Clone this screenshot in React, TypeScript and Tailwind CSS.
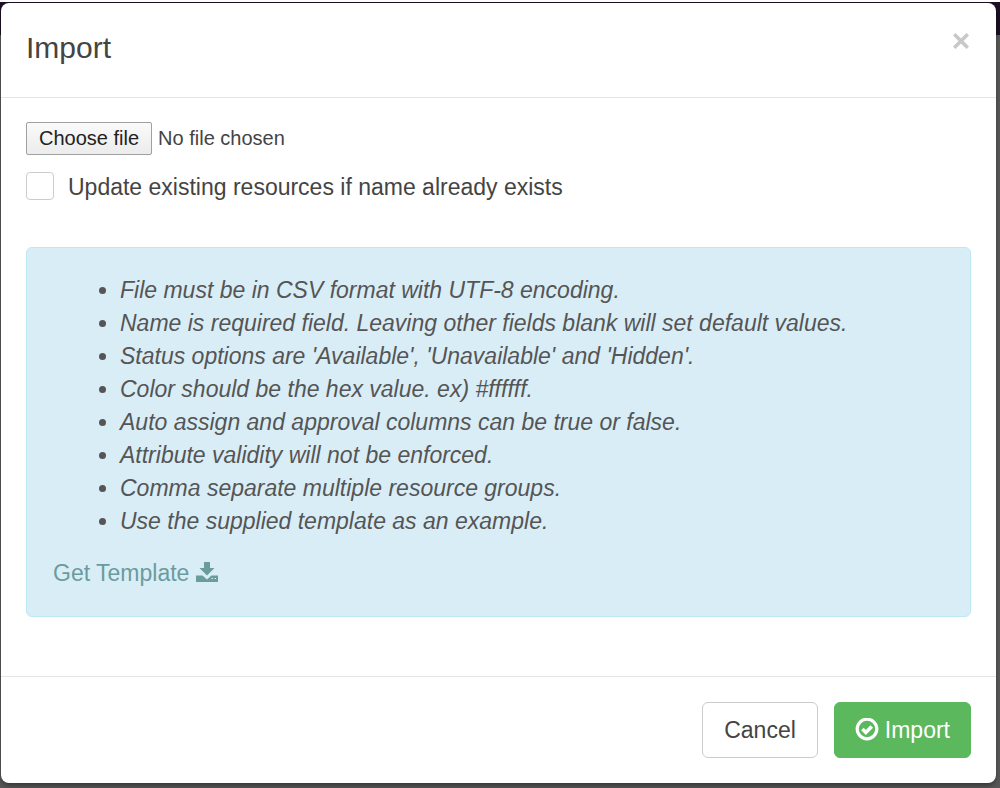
import { useState } from "react";

const hints = [
  "File must be in CSV format with UTF-8 encoding.",
  "Name is required field. Leaving other fields blank will set default values.",
  "Status options are 'Available', 'Unavailable' and 'Hidden'.",
  "Color should be the hex value. ex) #ffffff.",
  "Auto assign and approval columns can be true or false.",
  "Attribute validity will not be enforced.",
  "Comma separate multiple resource groups.",
  "Use the supplied template as an example.",
];

const DownloadIcon: React.FC = () => (
  <svg className="w-6 h-6" viewBox="0 0 24 24" fill="currentColor" aria-hidden="true">
    <path d="M9 0h6v6h4.500L12 13.500 4.500 6H9z" />
    <path
      d="M1 13.500h6.500L12 17.500l4.500-4H23V20H1zM16.500 16v1h1.500v-1zM19.500 16v1H21v-1z"
      fillRule="evenodd"
    />
  </svg>
);

const OkCircleIcon: React.FC = () => (
  <svg className="w-6 h-6" viewBox="0 0 24 24" fill="none" stroke="currentColor" aria-hidden="true">
    <circle cx="12" cy="11" r="9.800" strokeWidth="3.200" />
    <path d="M7.400 11l3.400 3.400 6-6" strokeWidth="3.600" />
  </svg>
);

const CloseIcon: React.FC = () => (
  <svg className="w-4 h-4" viewBox="0 0 16 16" stroke="currentColor" strokeWidth="3.600" aria-hidden="true">
    <path d="M1.200 1.200l13.600 13.600M14.800 1.200L1.200 14.800" />
  </svg>
);

const App: React.FC = () => {
  const [fileName, setFileName] = useState("");
  const [update, setUpdate] = useState(false);

  return (
    <div className="min-h-screen border-t-2 border-white bg-linear-to-b from-[#1b1024] from-[33px] to-[#585858] to-[33px] pt-px pl-px pr-1 pb-1 font-['Liberation_Sans',Arial,sans-serif] text-[23px] leading-[33px] text-[#444]">
      <div role="dialog" aria-labelledby="import-title" className="rounded-lg bg-white shadow-md shadow-black/30">
        <header className="flex items-start justify-between border-b border-[#e5e5e5] px-[25px] pt-6 pb-7">
          <h1 id="import-title" className="text-[30px] leading-[42px]">
            Import
          </h1>
          <button type="button" aria-label="Close" className="mt-1.5 mr-0.5 text-[#c8c8c8]">
            <CloseIcon />
          </button>
        </header>

        <div className="px-[25px] pt-6 pb-[59px]">
          <div className="flex items-center gap-1.5 text-xl leading-[31px]">
            <label
              htmlFor="import-file"
              className="rounded-xs border border-[#a0a0a0] bg-linear-to-b from-[#fafafa] to-[#ececec] px-3 text-[#222]"
            >
              Choose file
            </label>
            <input
              id="import-file"
              type="file"
              accept=".csv"
              className="sr-only"
              onChange={(e) => setFileName(e.target.files?.[0]?.name ?? "")}
            />
            <span>{fileName || "No file chosen"}</span>
          </div>

          <div className="mt-4 flex items-start gap-3.5">
            <input
              id="update-existing"
              type="checkbox"
              checked={update}
              onChange={(e) => setUpdate(e.target.checked)}
              className="mt-px size-7 appearance-none rounded-sm border border-[#ccc] bg-white checked:bg-[#5cb85c]"
            />
            <label htmlFor="update-existing">Update existing resources if name already exists</label>
          </div>

          <div className="mt-[43px] rounded-md border border-[#bce8f1] bg-[#d9edf7] px-[26px] py-[26px]">
            <ul className="list-disc pl-[67px] italic text-[#555]">
              {hints.map((hint) => (
                <li key={hint}>{hint}</li>
              ))}
            </ul>
            <a href="#template" className="mt-[19px] inline-flex items-center gap-1.5 text-[#6a9c9d]">
              Get Template
              <DownloadIcon />
            </a>
          </div>
        </div>

        <footer className="flex justify-end gap-4 border-t border-[#e5e5e5] p-[25px]">
          <button type="button" className="h-14 rounded-md border border-[#ccc] bg-white px-[21px]">
            Cancel
          </button>
          <button
            type="button"
            className="flex h-14 items-center gap-1.5 rounded-md border border-[#5cb85c] bg-[#5cb85c] px-5 text-white"
          >
            <OkCircleIcon />
            Import
          </button>
        </footer>
      </div>
    </div>
  );
};

export default App;
